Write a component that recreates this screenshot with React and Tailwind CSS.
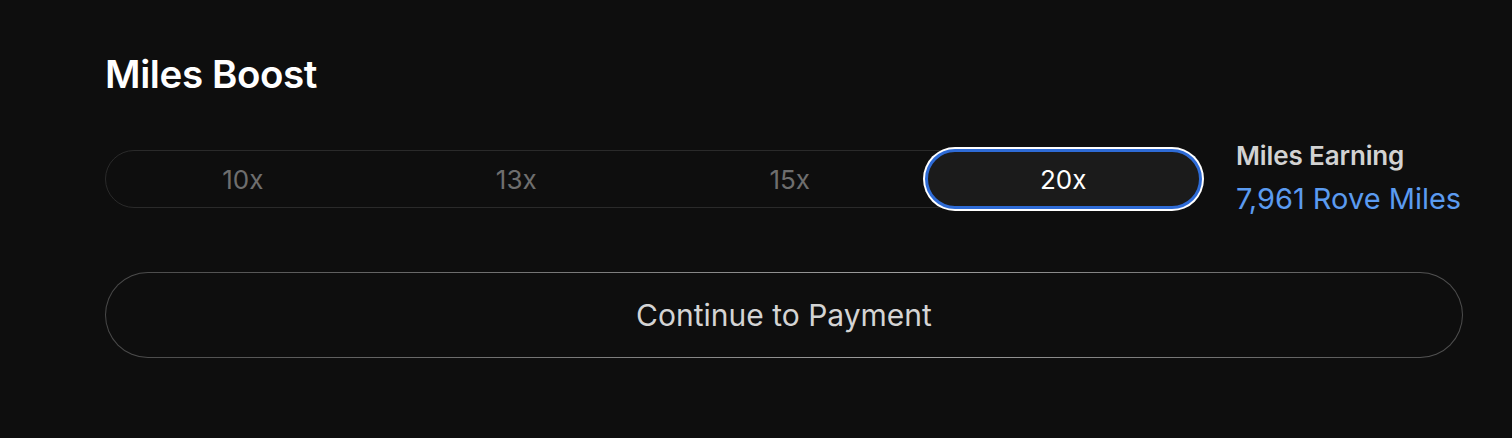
import { useState } from "react";

const boosts = ["10x", "13x", "15x", "20x"];

const App = () => {
  const [selected, setSelected] = useState("20x");

  return (
    <div
      className="w-full h-[438px] bg-[#0e0e0e] pl-[105px] pr-[49px] pt-[50px]"
      style={{ fontFamily: "Inter, 'Noto Sans', sans-serif" }}
    >
      {/* Title */}
      <h2 className="text-[38.5px] leading-[48px] font-semibold text-white tracking-[-0.01em]">
        Miles Boost
      </h2>

      {/* Boost picker + earning */}
      <div className="mt-[45px] flex items-center gap-[35px]">
        <div className="flex-1 grid grid-cols-4 h-[58px] rounded-full border border-[#2a2a2a]">
          {boosts.map((b) =>
            b === selected ? (
              <button
                key={b}
                onClick={() => setSelected(b)}
                className="-mx-[2px] -my-[2px] rounded-full bg-[#1b1b1b] border-[3px] border-[#2e6bd6] shadow-[0_0_0_2px_#ffffff] text-white text-[26px] flex items-center justify-center"
              >
                {b}
              </button>
            ) : (
              <button
                key={b}
                onClick={() => setSelected(b)}
                className="rounded-full text-[#6e6e6e] text-[26px] flex items-center justify-center"
              >
                {b}
              </button>
            )
          )}
        </div>

        <div className="w-[227px] flex flex-col whitespace-nowrap -mt-[2px]">
          <span className="text-[26px] leading-[30px] font-semibold text-[#d2d2d2] tracking-[-0.005em]">
            Miles Earning
          </span>
          <span className="mt-[12px] text-[29px] leading-[32px] text-[#5b9bf0]">
            7,961 Rove Miles
          </span>
        </div>
      </div>

      {/* Continue */}
      <div className="mt-[57px] rounded-full p-px bg-gradient-to-r from-[#484848] via-[#a0a0a0] via-60% to-[#4c4c4c]">
        <button className="w-full h-[84px] rounded-full bg-[#0e0e0e] text-[30px] text-[#d4d4d4] flex items-center justify-center">
          Continue to Payment
        </button>
      </div>
    </div>
  );
};

export default App;
